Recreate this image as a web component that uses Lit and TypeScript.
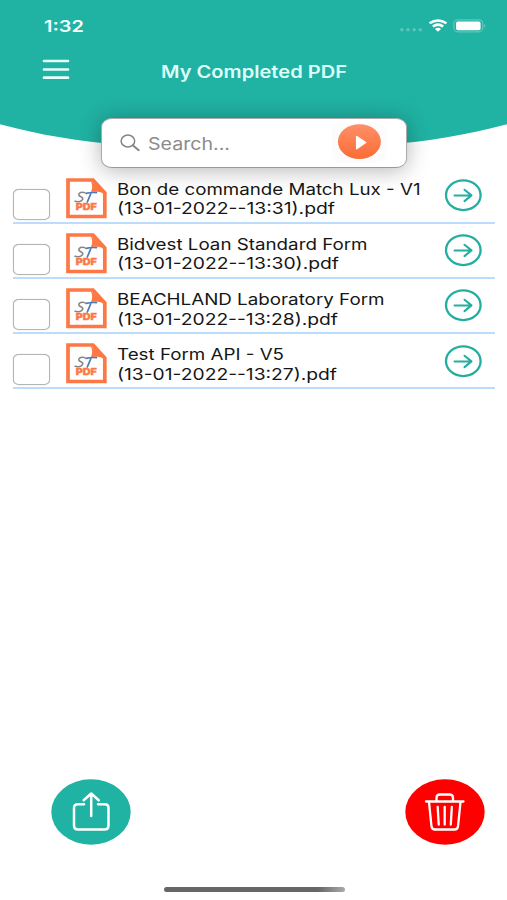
import { LitElement, html, css, svg } from "lit";
import { customElement, property } from "lit/decorators.js";

interface Line {
  text: string;
  width: number;
}

const FILES: [Line, Line][] = [
  [{ text: "Bon de commande Match Lux - V1", width: 303.5 }, { text: "(13-01-2022--13:31).pdf", width: 218 }],
  [{ text: "Bidvest Loan Standard Form", width: 250.5 }, { text: "(13-01-2022--13:30).pdf", width: 222 }],
  [{ text: "BEACHLAND Laboratory Form", width: 267.5 }, { text: "(13-01-2022--13:28).pdf", width: 221 }],
  [{ text: "Test Form API - V5", width: 167 }, { text: "(13-01-2022--13:27).pdf", width: 220 }],
];

/** A line of text set wide, stretched to a given length. */
@customElement("wide-text")
class WideText extends LitElement {
  @property() text = "";
  @property({ type: Number }) width = 100;
  @property({ type: Number }) height = 19.3;
  @property({ type: Number }) base = 15;

  static styles = css`
    :host { display: block; }
    svg { display: block; overflow: visible; fill: currentColor; }
  `;

  render() {
    return html`<svg width=${this.width} height=${this.height}>
      <text x="0" y=${this.base} textLength=${this.width} lengthAdjust="spacingAndGlyphs">${this.text}</text>
    </svg>`;
  }
}

@customElement("file-row")
class FileRow extends LitElement {
  @property({ attribute: false }) lines: Line[] = [];

  static styles = css`
    :host {
      display: flex;
      box-sizing: border-box;
      height: 55.2px;
      margin: 0 12px 0 13px;
      border-bottom: 2px solid #bcdcfb;
    }
    .check {
      box-sizing: border-box;
      width: 37px;
      height: 31px;
      margin-top: 20px;
      border: 1px solid #b4b4b4;
      border-radius: 6px / 5px;
      background: #fff;
      box-shadow: 0 0 1px #bbb;
    }
    .doc { margin: 9px 0 0 16px; width: 41px; height: 41px; }
    .name { margin: 11.4px 0 0 10.3px; flex: 1; font: 16px Inter, sans-serif; color: #161616; }
    .go { margin: 10.6px 13px 0 0; width: 38px; height: 33px; }
  `;

  render() {
    return html`
      <div class="check"></div>
      <svg class="doc" viewBox="0 0 41 41">
        <path d="M2 2H27L38.800 15V38.500H2Z" fill="#fff" stroke="#fd7845" stroke-width="3.700" />
        <path d="M24 2L39 15.500C34 13.600 29 13.300 25 14.200C26.800 9 26.500 6 24 2Z" fill="#fd7845" />
        <path d="M18.700 14.600C16 13.500 12.500 14.800 12.800 17C13.200 19.200 17.600 18.500 16.700 21.300C15.900 23.700 12 24.200 9 23.300" fill="none" stroke="#858585" stroke-width="1.500" stroke-linecap="round" />
        <path d="M20 15.300C23 14.600 27 14.400 30.500 14.600M25 15C24 18 22.500 21 21.300 24" fill="none" stroke="#4b7db4" stroke-width="1.700" stroke-linecap="round" />
        <text x="9.700" y="32.200" font-family="Inter, sans-serif" font-weight="800" font-size="8.500" textLength="21" lengthAdjust="spacingAndGlyphs" fill="#fd7845" stroke="#fd7845" stroke-width="0.500">PDF</text>
      </svg>
      <div class="name">
        ${this.lines.map((l) => html`<wide-text .text=${l.text} .width=${l.width}></wide-text>`)}
      </div>
      <svg class="go" viewBox="0 0 38 33" fill="none" stroke="#24ae9f">
        <ellipse cx="19.300" cy="16.200" rx="17.300" ry="14.900" stroke-width="2.300" />
        <path d="M10.500 16.400H27.500M20.500 10.700L27.500 16.400L20.500 22.100" stroke-width="2" stroke-linecap="round" stroke-linejoin="round" />
      </svg>
    `;
  }
}

@customElement("app-root")
class AppRoot extends LitElement {
  static styles = css`
    :host {
      display: flex;
      flex-direction: column;
      position: relative;
      width: 507px;
      height: 900px;
      overflow: hidden;
      background: #fff;
      font-family: Inter, sans-serif;
    }
    .wave { position: absolute; left: 0; top: 0; width: 507px; height: 160px; }
    .status {
      position: relative;
      display: flex;
      justify-content: space-between;
      height: 40px;
      padding: 0 20px 0 44px;
      color: #f2fffd;
      font-size: 16px;
      font-weight: 600;
    }
    .status wide-text { margin-top: 16.6px; }
    .signals { width: 88px; height: 40px; }
    .bar { position: relative; display: flex; height: 78px; padding-left: 42px; color: #dcfffa; font-size: 17px; font-weight: 600; }
    .menu { width: 28px; height: 24px; margin-top: 18px; }
    .bar wide-text { margin: 22.5px 0 0 91.3px; }
    .search {
      position: relative;
      box-sizing: border-box;
      display: flex;
      width: 306px;
      height: 50px;
      margin-left: 101px;
      border: 1px solid #aaa;
      border-bottom-color: #999;
      border-radius: 11px / 9px;
      background: #fff;
      box-shadow: 0 2px 22px rgba(0, 0, 0, 0.3);
      color: #8b8b8b;
      font-size: 17px;
    }
    .glass { width: 22px; height: 20px; margin: 14px 0 0 18px; }
    .search wide-text { margin: 15.8px 0 0 5.5px; }
    .play { width: 56px; height: 46px; margin: 0 19.5px 0 auto; }
    .list { margin-top: 0.5px; }
    .actions { display: flex; justify-content: space-between; margin: auto 21.8px 42.3px 51.2px; }
    .actions svg { width: 80px; height: 66px; }
    .home {
      flex: none;
      width: 181px;
      height: 5px;
      margin: 0 0 8px 163.5px;
      border-radius: 3px;
      background: linear-gradient(90deg, #666 85%, #aaa);
    }
  `;

  render() {
    return html`
      <svg class="wave" viewBox="0 0 507 160">
        <path d="M0 0H507V124.200C427 146 347 149 253.500 149C160 149 80 146 0 124.200Z" fill="#20b2a3" />
      </svg>
      <div class="status">
        <wide-text .text=${"1:32"} .width=${40}></wide-text>
        <svg class="signals" viewBox="0 0 88 40" fill="none">
          ${[2.7, 8.8, 15, 21].map((x) => svg`<circle cx=${x + 0.2} cy="29.800" r="1.700" fill="#5cc6bb" />`)}
          <path d="M30.500 23.300Q39 17.500 47.500 23.300M33.800 26.600Q39 22.700 44.200 26.600" stroke="#fff" stroke-width="2.500" />
          <path d="M35.900 29Q39 26.700 42.100 29L39 31.700Z" fill="#fff" />
          <rect x="54.800" y="19.800" width="29" height="12" rx="4" stroke="#5fc7bc" stroke-width="1.200" />
          <rect x="57" y="21.600" width="24.600" height="8.600" rx="2" fill="#fff" />
          <path d="M85.300 24Q87.500 25.800 85.300 27.800Z" fill="#79d0c7" />
        </svg>
      </div>
      <div class="bar">
        <svg class="menu" viewBox="0 0 28 24" stroke="#e6fffc" stroke-width="2.700" stroke-linecap="round">
          <path d="M2 3H26M2 11.500H26M2 19.700H26" />
        </svg>
        <wide-text .text=${"My Completed PDF"} .width=${186}></wide-text>
      </div>
      <div class="search">
        <svg class="glass" viewBox="0 0 22 20" fill="none" stroke="#858585" stroke-linecap="round">
          <ellipse cx="7.900" cy="8" rx="6.800" ry="5.900" stroke-width="1.500" />
          <path d="M13 12.500L18.700 17.200" stroke-width="2" />
        </svg>
        <wide-text .text=${"Search..."} .width=${82}></wide-text>
        <svg class="play" viewBox="0 0 56 46">
          <defs>
            <linearGradient id="g" x1="0" y1="0" x2="0" y2="1">
              <stop offset="0" stop-color="#ff8f68" />
              <stop offset="1" stop-color="#fb6c34" />
            </linearGradient>
          </defs>
          <rect x="1" y="4" width="54" height="40" rx="8" fill="#fcfcfc" />
          <ellipse cx="28.400" cy="22.600" rx="21.500" ry="17.400" fill="url(#g)" />
          <path d="M25.700 17.500V29.700L34.700 23.500Z" fill="#fff" stroke="#fff" stroke-width="1.500" stroke-linejoin="round" />
        </svg>
      </div>
      <div class="list">
        ${FILES.map((lines) => html`<file-row .lines=${lines}></file-row>`)}
      </div>
      <div class="actions">
        <svg viewBox="0 0 80 66" fill="none" stroke="#fff" stroke-width="2.500" stroke-linecap="round" stroke-linejoin="round">
          <ellipse cx="40" cy="33" rx="39.700" ry="32.700" fill="#20b2a3" stroke="none" />
          <path d="M33 25.300H27Q23 25.300 23 29V46.500Q23 50.500 27 50.500H53.500Q57.500 50.500 57.500 46.500V29Q57.500 25.300 53.500 25.300H47M40.200 37V15M32.700 21.300L40.200 14.500L47.700 21.300" />
        </svg>
        <svg viewBox="0 0 80 66" fill="none" stroke="#fff" stroke-width="2.300" stroke-linecap="round" stroke-linejoin="round">
          <ellipse cx="40" cy="33" rx="39.700" ry="32.700" fill="#fe0000" stroke="none" />
          <path d="M21 22.500H58.500M31.500 22V19Q31.500 15.500 35 15.500H44.500Q48 15.500 48 19V22M24 23L26.500 47.500Q27 50.500 30 50.500H49.500Q52.500 50.500 53 47.500L55.500 23M32.700 28L33.700 45.500M39.700 28V45.500M46.800 28L45.800 45.500" />
        </svg>
      </div>
      <div class="home"></div>
    `;
  }
}
